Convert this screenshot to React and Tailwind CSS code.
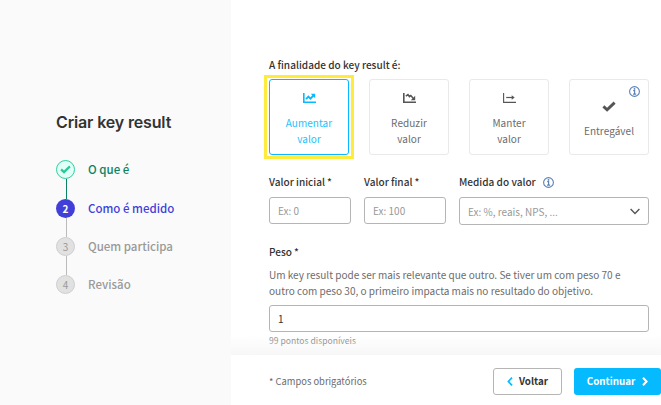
import React from 'react';

const Info = ({ className = '' }) => (
  <svg className={className} width="11" height="11" viewBox="0 0 11 11" fill="none">
    <circle cx="5.5" cy="5.5" r="4.9" stroke="#5b82b8" strokeWidth="1.1" />
    <path d="M4.2 4.7H5.6V8M4 8.1H7.2" stroke="#5b82b8" strokeWidth="1.2" />
    <circle cx="5.5" cy="2.9" r=".9" fill="#5b82b8" />
  </svg>
);

const Check = ({ className = '', width = 14, height = 11 }) => (
  <svg className={className} width={width} height={height} viewBox="0 0 14 11" fill="none">
    <path d="M1.4 5.4L5.1 8.8L12.6 1.6" stroke="currentColor" strokeWidth="2.9" />
  </svg>
);

const Axis = () => <path d="M.8 0V9.2H13" stroke="currentColor" strokeWidth="1.6" />;

const icons = {
  up: (
    <svg width="13" height="10" viewBox="0 0 13 10" fill="none">
      <Axis />
      <path d="M3 6.1L5.4 3.6L7.4 5.7L10.5 2.5" stroke="currentColor" strokeWidth="1.8" />
      <path d="M7.8 .8H12.2V5.2Z" fill="currentColor" />
    </svg>
  ),
  down: (
    <svg width="13" height="10" viewBox="0 0 13 10" fill="none">
      <Axis />
      <path d="M2.8 3.2L5 1.6L6.4 3.6L7.8 2.6L10.4 5.4" stroke="currentColor" strokeWidth="1.5" />
      <path d="M12.2 2.8V7.2H7.8Z" fill="currentColor" />
    </svg>
  ),
  keep: (
    <svg width="13" height="10" viewBox="0 0 13 10" fill="none">
      <path d="M.6 0V9.4H13" stroke="currentColor" strokeWidth="1.1" />
      <path d="M3.2 4.5H9.5" stroke="currentColor" strokeWidth="1.2" />
      <path d="M8.7 2.3L11.7 4.5L8.7 6.7Z" fill="currentColor" />
    </svg>
  ),
};

function Card({ icon, children, active }) {
  return (
    <div
      className={
        'flex h-[76px] w-20 flex-col items-center rounded-[3px] border pt-[13px] text-center text-[10px] leading-4 tracking-[.05px] ' +
        (active ? 'border-[#05baff] text-[#25bffc]' : 'border-[#e9e9e9] text-[#6c6c6c]')
      }
    >
      <span className={'block h-[10px] ' + (active ? 'text-[#05baff]' : 'text-[#555]')}>
        {icons[icon]}
      </span>
      <span className="mt-[12px]">{children}</span>
    </div>
  );
}

function Step({ n, label, state, last }) {
  const circle = {
    done: 'border border-[#2fcf9f] bg-[#e2fff7] text-[#2bc79a]',
    current: 'bg-[#423fd8] text-white font-bold',
    todo: 'border border-[#cecece] bg-[#e1e1e1] text-[#999]',
  }[state];
  const text = { done: 'text-[#0b8363]', current: 'text-[#423fd8]', todo: 'text-[#999]' }[state];
  const height = last ? '' : state === 'done' ? 'h-[39px]' : 'h-[38px]';
  return (
    <li className={'flex ' + height}>
      <div className="flex w-[19px] flex-col items-center">
        <div className={'flex size-[19px] shrink-0 items-center justify-center rounded-full text-[10px] leading-none ' + circle}>
          {state === 'done' ? <Check width={11} height={9} /> : n}
        </div>
        {!last && <div className={'ml-[2px] w-px flex-1 ' + (state === 'done' ? 'bg-[#0b8363]' : 'bg-[#bbb]')} />}
      </div>
      <span className={'ml-[13px] text-[11.5px] font-medium leading-[19px] ' + text}>{label}</span>
    </li>
  );
}

const field = 'flex items-center rounded-[3px] border border-[#b5b5b5] px-2 text-[10px]';
const label = 'text-[10.05px] font-medium leading-4 text-[#333]';

export default function App() {
  return (
    <div className="flex h-[405px] w-[661px] overflow-hidden bg-white font-['Noto_Sans_CJK_SC',sans-serif]">
      <aside className="w-[231px] bg-[#fafafa] pl-14 pt-[112px]">
        <h1 className="whitespace-nowrap font-['Inter',sans-serif] text-[16px] font-semibold leading-[20px] tracking-[-.15px] text-[#333]">Criar key result</h1>
        <ul className="mt-7">
          <Step n="1" label="O que é" state="done" />
          <Step n="2" label="Como é medido" state="current" />
          <Step n="3" label="Quem participa" state="todo" />
          <Step n="4" label="Revisão" state="todo" last />
        </ul>
      </aside>
      <main className="flex flex-1 flex-col">
        <section className="h-[355px] bg-[linear-gradient(to_bottom,#fff_335px,#f7f7f7_355px)] pl-[38px] pt-[57px]">
          <p className={label}>A finalidade do key result é:</p>
          <div className="mt-[6px] flex gap-5">
            <div className="-mx-[5px] -my-[4px] border-[3px] border-[#ffeb3b] px-[2px] py-px">
              <Card icon="up" active>Aumentar<br />valor</Card>
            </div>
            <Card icon="down">Reduzir<br />valor</Card>
            <Card icon="keep">Manter<br />valor</Card>
            <div className="flex h-[76px] w-20 flex-col items-center rounded-[3px] border border-[#e9e9e9] pt-[6px]">
              <Info className="mr-[8px] self-end" />
              <Check className="mt-[4px] text-[#555]" />
              <span className="mt-[11px] text-[10px] leading-4 tracking-[.05px] text-[#6c6c6c]">Entregável</span>
            </div>
          </div>
          <div className="mt-[19px] flex">
            <div className="mr-[13px] w-[82px]">
              <p className={label}>Valor inicial<span className="ml-[2px]">*</span></p>
              <div className={field + ' mt-[7px] h-[27px] text-[#999]'}>Ex: 0</div>
            </div>
            <div className="mr-[13px] w-[82px]">
              <p className={label}>Valor final<span className="ml-[2px]">*</span></p>
              <div className={field + ' mt-[7px] h-[27px] text-[#999]'}>Ex: 100</div>
            </div>
            <div className="w-[190px]">
              <p className={label + ' flex items-center'}>Medida do valor<Info className="ml-[7px]" /></p>
              <div className={field + ' mt-[7px] h-[28px] justify-between text-[#999]'}>
                Ex: %, reais, NPS, ...
                <svg width="10" height="7" viewBox="0 0 10 7" fill="none">
                  <path d="M.6 1L5 5.4L9.4 1" stroke="#555" strokeWidth="1.4" />
                </svg>
              </div>
            </div>
          </div>
          <p className={label + ' mt-[19px]'}>Peso<span className="ml-[2px]">*</span></p>
          <p className="mt-[7px] whitespace-nowrap text-[10.04px] leading-4 text-[#6c6c6c]">
            Um key result pode ser mais relevante que outro. Se tiver um com peso 70 e<br />
            outro com peso 30, o primeiro impacta mais no resultado do objetivo.
          </p>
          <div className={field + ' mt-[6px] h-[27px] w-[380px] text-[#333]'}>1</div>
          <p className="mt-[1px] text-[8.6px] leading-[14px] text-[#999]">99 pontos disponíveis</p>
        </section>
        <footer className="flex h-[50px] items-center bg-white pl-[38px] pb-px pt-[3px]">
          <span className="text-[9.4px] text-[#6c6c6c]">* Campos obrigatórios</span>
          <button className="ml-auto flex h-[27px] w-[69px] items-center justify-center gap-[6px] rounded-[3px] border border-[#b5b5b5] text-[9.8px] font-bold text-[#333]">
            <svg width="6" height="9" viewBox="0 0 6 9" fill="none"><path d="M5 .7L1.4 4.5L5 8.3" stroke="#05baff" strokeWidth="1.7" /></svg>
            Voltar
          </button>
          <button className="ml-3 flex h-[27px] w-[87px] items-center justify-center gap-[7px] rounded-[3px] bg-[#05baff] text-[9.8px] font-bold text-white">
            Continuar
            <svg width="6" height="9" viewBox="0 0 6 9" fill="none"><path d="M1 .7L4.6 4.5L1 8.3" stroke="currentColor" strokeWidth="2" /></svg>
          </button>
        </footer>
      </main>
    </div>
  );
}
